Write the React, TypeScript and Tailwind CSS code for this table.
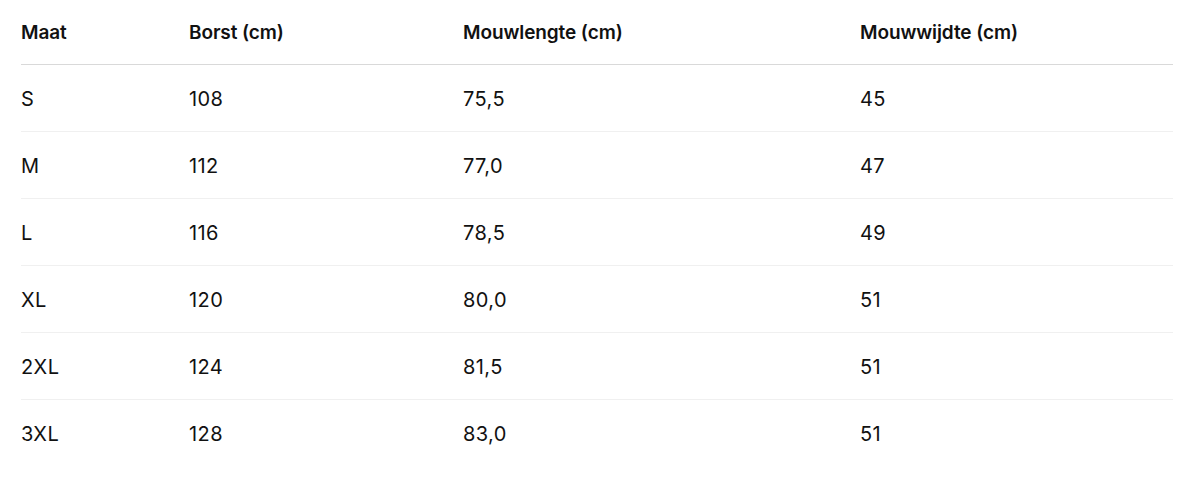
import React from "react";

const rows = [
  ["S", "108", "75,5", "45"],
  ["M", "112", "77,0", "47"],
  ["L", "116", "78,5", "49"],
  ["XL", "120", "80,0", "51"],
  ["2XL", "124", "81,5", "51"],
  ["3XL", "128", "83,0", "51"],
];

const head = ["Maat", "Borst (cm)", "Mouwlengte (cm)", "Mouwwijdte (cm)"];

export default function App() {
  return (
    <div
      className="w-[1182px] h-[478px] bg-white pl-[21px] pr-[9px] pt-[1px] text-[#111111]"
      style={{ fontFamily: "Inter, 'Noto Sans', sans-serif" }}
    >
      <div className="grid grid-cols-[168px_274px_397px_1fr] h-[64px] items-center border-b border-[#d9d9d9] text-[19px] font-semibold tracking-[-0.1px]">
        {head.map((h) => (
          <div key={h} className="pt-[1px]">{h}</div>
        ))}
      </div>
      {rows.map((r, i) => (
        <div
          key={r[0]}
          className={`grid grid-cols-[168px_274px_397px_1fr] h-[67px] items-center text-[20px] tracking-[0.4px] ${
            i < rows.length - 1 ? "border-b border-[#f0f0f0]" : ""
          }`}
        >
          {r.map((c, j) => (
            <div key={j} className="pt-[1px]">{c}</div>
          ))}
        </div>
      ))}
    </div>
  );
}
